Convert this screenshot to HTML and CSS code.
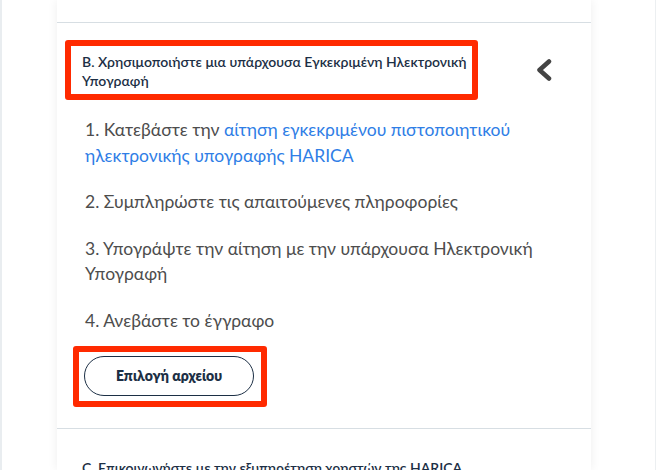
FILE: index.html
```html
<!DOCTYPE html>
<html lang="el">
<head>
    <meta charset="UTF-8">
    <meta name="viewport" content="width=device-width, initial-scale=1.0">
    <title>HARICA - Επιβεβαίωση</title>
    <link rel="stylesheet" href="styles.css">
</head>
<body>
<div class="card">
    <div class="card-top"></div>

    <div class="option">
        <div class="option-header">
            <h3 class="option-title marked">Β. Χρησιμοποιήστε μια υπάρχουσα Εγκεκριμένη Ηλεκτρονική Υπογραφή</h3>
            <svg class="chevron" width="16" height="22" viewBox="0 0 16 22">
                <path d="M13 2.5 L3.5 11 L13 19.5" fill="none" stroke="#444" stroke-width="4.5" stroke-linejoin="round" stroke-linecap="round"/>
            </svg>
        </div>
        <div class="steps">
            <p>1. Κατεβάστε την <a href="#">αίτηση εγκεκριμένου πιστοποιητικού ηλεκτρονικής υπογραφής HARICA</a></p>
            <p>2. Συμπληρώστε τις απαιτούμενες πληροφορίες</p>
            <p>3. Υπογράψτε την αίτηση με την υπάρχουσα Ηλεκτρονική Υπογραφή</p>
            <p>4. Ανεβάστε το έγγραφο</p>
        </div>
        <div class="upload marked">
            <button type="button" class="btn-outline">Επιλογή αρχείου</button>
        </div>
    </div>

    <div class="option">
        <div class="option-header">
            <h3 class="option-title">C. Επικοινωνήστε με την εξυπηρέτηση χρηστών της HARICA</h3>
        </div>
    </div>
</div>
</body>
</html>
```

FILE: styles.css
```css
body {
    margin: 0;
    height: 470px;
    overflow: hidden;
    background-color: #ffffff;
    border-left: 2px solid #e9edf0;
    border-right: 1px solid #eceff1;
    font-family: Lato, "Open Sans", sans-serif;
}

.card {
    margin-left: 55px;
    width: 534px;
    height: 100%;
    background-color: #ffffff;
    box-shadow: 0 0 10px rgba(0, 0, 0, 0.07);
}

.card-top {
    height: 22px;
}

.option {
    border-top: 1px solid #d7dee3;
    padding: 17px 0 21px 8px;
}

.option-header {
    display: flex;
    align-items: center;
    justify-content: space-between;
    padding-right: 39px;
}

.option-title {
    margin: 0;
    width: 387px;
    padding: 6px 3px 4px 11px;
    font-size: 14px;
    font-weight: 600;
    line-height: 19px;
    color: #1c2f45;
    border: 6px solid transparent;
}

.marked {
    border: 6px solid #ff2a00;
    border-radius: 3px;
}

.steps {
    padding: 17px 40px 0 20px;
}

.steps p {
    margin: 0 0 21px 0;
    font-size: 17.5px;
    line-height: 25.6px;
    color: #4d4d4d;
}

.steps p:last-child {
    margin-bottom: 0;
}

.steps a {
    color: #2f7ee6;
    text-decoration: none;
}

.upload {
    width: fit-content;
    margin: 12px 0 0 8px;
    padding: 4px 7px 5px 5px;
}

.btn-outline {
    display: block;
    width: 170px;
    height: 40px;
    background-color: #ffffff;
    border: 1px solid #1c2f45;
    border-radius: 20px;
    font-family: Lato, "Open Sans", sans-serif;
    font-size: 14px;
    font-weight: 800;
    color: #1c2f45;
    cursor: pointer;
}
```
